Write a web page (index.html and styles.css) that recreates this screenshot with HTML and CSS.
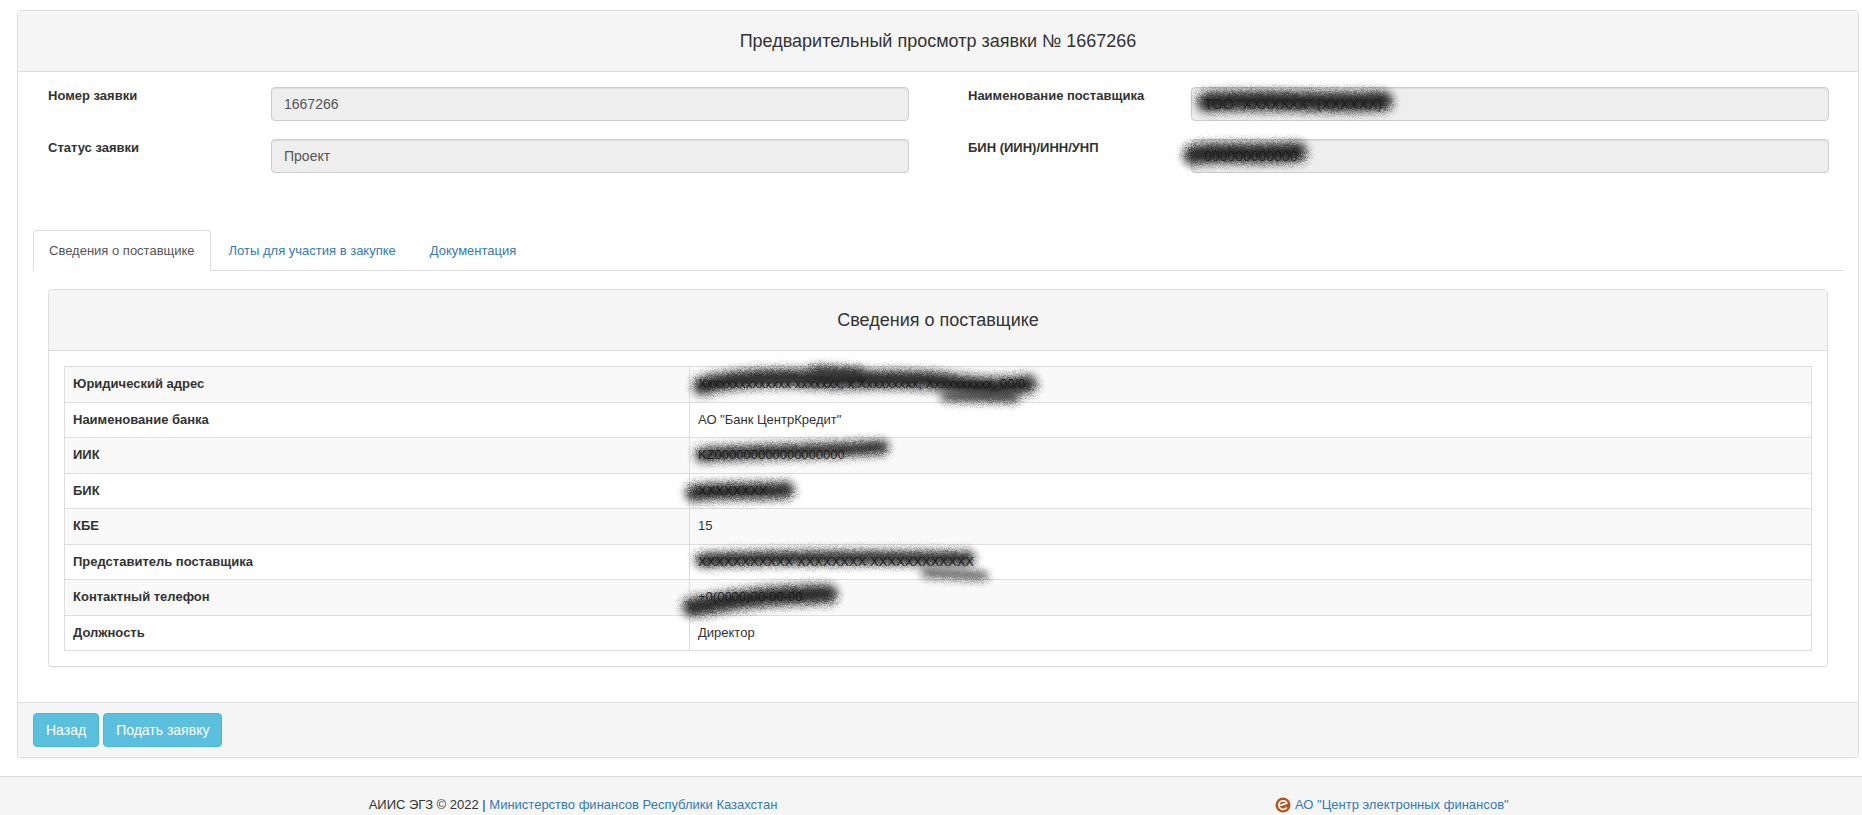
FILE: index.html
```html
<!DOCTYPE html>
<html lang="en">
<head>
  <meta charset="UTF-8" />
  <meta name="viewport" content="width=device-width, initial-scale=1.0">
  <title>Предварительный просмотр заявки</title>
  <link rel="stylesheet" href="styles.css">
</head>
<body>
  <!-- Grainy marker strokes used over hidden values -->
  <svg class="defs" width="0" height="0" aria-hidden="true">
    <filter id="grain" filterUnits="userSpaceOnUse" x="-60" y="-60" width="560" height="180">
      <feGaussianBlur stdDeviation="4.2" result="soft"/>
      <feTurbulence type="fractalNoise" baseFrequency="1.6" numOctaves="2" result="noise"/>
      <feDisplacementMap in="soft" in2="noise" scale="9"/>
    </filter>
  </svg>

  <div class="wrapper">
    <div class="panel">
      <div class="panel-heading">Предварительный просмотр заявки № 1667266</div>

      <div class="panel-body">
        <div class="info-grid">
          <label>Номер заявки</label>
          <div class="field"><input type="text" value="1667266" disabled></div>
          <label>Наименование поставщика</label>
          <div class="field">
            <input type="text" value="ТОО &quot;XXXXXXX&quot; (XXXXXX)" disabled>
            <svg class="smear"><path d="M16 15 C70 11 130 17 192 14" stroke-width="20"/></svg>
          </div>
          <label>Статус заявки</label>
          <div class="field"><input type="text" value="Проект" disabled></div>
          <label>БИН (ИИН)/ИНН/УНП</label>
          <div class="field">
            <input type="text" value="000000000000" disabled>
            <svg class="smear"><path d="M2 16 C30 12 70 16 106 13" stroke-width="20"/></svg>
          </div>
        </div>

        <ul class="tabs">
          <li class="active"><a href="#">Сведения о поставщике</a></li>
          <li><a href="#">Лоты для участия в закупке</a></li>
          <li><a href="#">Документация</a></li>
        </ul>

        <div class="tab-content">
          <div class="panel inner">
            <div class="panel-heading">Сведения о поставщике</div>
            <div class="panel-body">
              <table class="table">
                <tr>
                  <th>Юридический адрес</th>
                  <td>Xxxxxxxxxxxxxx xxxxxxx, x.Xxxxxxxxx, Xxxxxxxxxx, 00/0
                    <svg class="smear"><path d="M12 19 C40 11 90 9 125 12 S215 9 255 15 S320 20 338 17" stroke-width="18"/><path d="M125 3 L170 5 M255 30 L325 31" stroke-width="8"/></svg>
                  </td>
                </tr>
                <tr><th>Наименование банка</th><td>АО "Банк ЦентрКредит"</td></tr>
                <tr>
                  <th>ИИК</th>
                  <td>KZ000000000000000000
                    <svg class="smear"><path d="M12 17 C60 13 130 14 192 9" stroke-width="14"/></svg>
                  </td>
                </tr>
                <tr>
                  <th>БИК</th>
                  <td>XXXXXXXX
                    <svg class="smear"><path d="M4 19 C30 16 70 18 96 16" stroke-width="17"/></svg>
                  </td>
                </tr>
                <tr><th>КБЕ</th><td>15</td></tr>
                <tr>
                  <th>Представитель поставщика</th>
                  <td>XXXXXXXXXXX XXXXXXXX XXXXXXXXXXXX
                    <svg class="smear"><path d="M12 15 C90 11 190 13 278 13" stroke-width="14"/><path d="M235 28 L294 31" stroke-width="7"/></svg>
                  </td>
                </tr>
                <tr>
                  <th>Контактный телефон</th>
                  <td>+0(0000)00-00-00
                    <svg class="smear"><path d="M2 27 C30 24 60 15 138 14" stroke-width="19"/></svg>
                  </td>
                </tr>
                <tr><th>Должность</th><td>Директор</td></tr>
              </table>
            </div>
          </div>
        </div>
      </div>

      <div class="panel-footer">
        <button class="btn">Назад</button>
        <button class="btn">Подать заявку</button>
      </div>
    </div>
  </div>

  <footer>
    <p>АИИС ЭГЗ © 2022 | <a href="#">Министерство финансов Республики Казахстан</a></p>
    <p>
      <svg class="logo" viewBox="0 0 16 16" aria-hidden="true">
        <circle cx="8" cy="8" r="7.5" fill="#b4541a"/>
        <path d="M3.6 8.9 L11.9 6.2 C11 3.9 7.6 3 5.4 4.7 C3 6.6 3.4 10.6 6.1 11.9 C8.2 12.9 10.4 12.2 11.8 10.4" fill="none" stroke="#fff" stroke-width="1.7"/>
      </svg>
      <a href="#">АО "Центр электронных финансов"</a>
    </p>
  </footer>
</body>
</html>
```

FILE: styles.css
```css
* {
  box-sizing: border-box;
}

body {
  margin: 0;
  font-family: "Liberation Sans", Arial, sans-serif;
  font-size: 14px;
  line-height: 1.42857;
  color: #333;
  background-color: #fff;
}

a {
  color: #337ab7;
  text-decoration: none;
}

.defs {
  position: absolute;
}

.wrapper {
  padding: 10px 3px 0 17px;
}

.panel {
  background-color: #fff;
  border: 1px solid #ddd;
  border-radius: 4px;
  box-shadow: 0 1px 1px rgba(0, 0, 0, 0.05);
}

.panel-heading {
  height: 61px;
  line-height: 60px;
  text-align: center;
  font-size: 18px;
  background-color: #f5f5f5;
  border-bottom: 1px solid #ddd;
  border-radius: 3px 3px 0 0;
}

.panel-body {
  padding: 15px;
}

.panel-footer {
  height: 55px;
  padding: 10px 15px;
  display: flex;
  gap: 4px;
  background-color: #f5f5f5;
  border-top: 1px solid #ddd;
  border-radius: 0 0 3px 3px;
}

/* top form */
.info-grid {
  display: grid;
  grid-template-columns: 223px 638px 282px 638px;
  row-gap: 18px;
  padding-left: 15px;
  margin-bottom: 57px;
}

.info-grid label {
  font-size: 13px;
  font-weight: bold;
  line-height: 17px;
}

.info-grid label:nth-of-type(even) {
  padding-left: 59px;
}

.field {
  position: relative;
  height: 34px;
}

.field input {
  display: block;
  width: 100%;
  height: 34px;
  padding: 6px 12px;
  font-family: inherit;
  font-size: 14px;
  color: #555;
  background-color: #eee;
  border: 1px solid #ccc;
  border-radius: 4px;
  box-shadow: inset 0 1px 1px rgba(0, 0, 0, 0.075);
  opacity: 1;
}

/* tabs */
.tabs {
  display: flex;
  margin: 0;
  padding: 0;
  list-style: none;
  border-bottom: 1px solid #ddd;
}

.tabs li {
  margin-bottom: -1px;
}

.tabs a {
  display: block;
  height: 41px;
  margin-right: 2px;
  padding: 11px 15px;
  font-size: 13px;
  line-height: 18px;
  border: 1px solid transparent;
  border-radius: 4px 4px 0 0;
}

.tabs .active a {
  color: #555;
  background-color: #fff;
  border-color: #ddd #ddd #fff;
}

.tab-content {
  padding: 18px 15px 0;
}

.inner {
  margin-bottom: 20px;
}

/* supplier table */
.table {
  width: 100%;
  border-collapse: collapse;
  font-size: 13px;
  line-height: 18.5px;
}

.table th,
.table td {
  position: relative;
  padding: 8px;
  text-align: left;
  border: 1px solid #ddd;
}

.table th {
  width: 625px;
}

.table tr:nth-child(odd) {
  background-color: #f9f9f9;
}

.btn {
  height: 34px;
  padding: 6px 12px;
  font-family: inherit;
  font-size: 14px;
  color: #fff;
  background-color: #5bc0de;
  border: 1px solid #46b8da;
  border-radius: 4px;
}

/* hand drawn marker over hidden data */
.smear {
  position: absolute;
  top: 0;
  left: 0;
  width: 1px;
  height: 1px;
  overflow: visible;
  pointer-events: none;
  z-index: 1;
}

.smear path {
  fill: none;
  stroke: #151515;
  stroke-linecap: round;
  opacity: 0.9;
  filter: url(#grain);
}

/* page footer */
footer {
  display: grid;
  grid-template-columns: 1146px 492px;
  height: 39px;
  margin-top: 18px;
  overflow: hidden;
  font-size: 13px;
  text-align: center;
  background-color: #f5f5f5;
  border-top: 1px solid #ddd;
}

footer p {
  margin: 0;
  padding-top: 19px;
}

.logo {
  width: 16px;
  height: 16px;
  vertical-align: -4px;
}
```
